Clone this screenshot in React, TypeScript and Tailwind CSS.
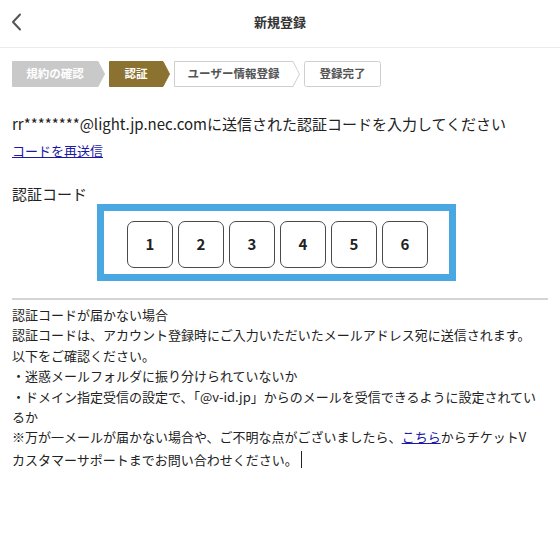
import React from "react";

function Step({
  width,
  fill,
  stroke,
  arrow,
  textColor,
  label,
}: {
  width: number;
  fill: string;
  stroke?: string;
  arrow: boolean;
  textColor: string;
  label: string;
}) {
  const h = 26;
  const tip = 7;
  const d = arrow
    ? `M0.5 0.5 H${width - tip} L${width - 0.5} ${h / 2} L${width - tip} ${h - 0.5} H0.5 Z`
    : `M2.5 0.5 H${width - 2.5} Q${width - 0.5} 0.5 ${width - 0.5} 2.5 V${h - 2.5} Q${width - 0.5} ${h - 0.5} ${width - 2.5} ${h - 0.5} H2.5 Q0.5 ${h - 0.5} 0.5 ${h - 2.5} V2.5 Q0.5 0.5 2.5 0.5 Z`;
  return (
    <div className="relative h-[26px] shrink-0" style={{ width }}>
      <svg className="absolute inset-0" width={width} height={h} viewBox={`0 0 ${width} ${h}`}>
        <path d={d} fill={fill} stroke={stroke ?? fill} strokeWidth={1} />
      </svg>
      <div
        className="relative flex h-full items-center justify-center text-[11.5px] font-bold"
        style={{ color: textColor, paddingRight: arrow ? tip : 0 }}
      >
        {label}
      </div>
    </div>
  );
}

export default function App() {
  const font = { fontFamily: '"Noto Sans CJK JP", "Noto Sans", sans-serif' };
  return (
    <div className="w-[560px] h-[560px] bg-white text-[#222]" style={font}>
      <header className="relative flex h-12 items-center justify-center border-b border-[#ececec]">
        <svg
          className="absolute left-[10px] top-[12px]"
          width="14"
          height="20"
          viewBox="0 0 14 20"
        >
          <polyline points="10,2.5 3,10 10,17.5" fill="none" stroke="#555" strokeWidth="2" strokeLinecap="round" strokeLinejoin="round" />
        </svg>
        <h1 className="text-[13px] font-bold text-[#333] -mt-[4px]">新規登録</h1>
      </header>

      <main className="px-3">
        <div className="mt-[13px] flex items-center gap-[4px]">
          <Step width={93} fill="#c9c9c9" arrow textColor="#ffffff" label="規約の確認" />
          <Step width={61} fill="#8c7230" arrow textColor="#ffffff" label="認証" />
          <Step width={126} fill="#ffffff" stroke="#cfcfcf" arrow textColor="#555" label="ユーザー情報登録" />
          <Step width={77} fill="#ffffff" stroke="#cfcfcf" arrow={false} textColor="#555" label="登録完了" />
        </div>

        <p className="mt-[26px] text-[15px] leading-[22px] text-[#222]">
          rr********@light.jp.nec.comに送信された認証コードを入力してください
        </p>
        <a href="#" className="mt-[6px] block text-[13px] leading-[20px] text-[#1a1aa6] underline">
          コードを再送信
        </a>

        <p className="mt-[23px] text-[15px] leading-[20px] text-[#222]">認証コード</p>

        <div className="ml-[85px] h-[77px] w-[359px] border-[7px] border-[#49a7e2] pl-[23px] pt-[10px]">
          <div className="flex gap-[5px]">
            {["1", "2", "3", "4", "5", "6"].map((n) => (
              <div
                key={n}
                className="flex h-[47px] w-[46px] items-center justify-center rounded-[7px] border border-[#4a4a4a] text-[15px] font-semibold text-[#222]"
              >
                {n}
              </div>
            ))}
          </div>
        </div>

        <div className="mt-[17px] h-[2px] bg-[#d4d4d4]" />

        <div className="mt-[5px] whitespace-nowrap text-[13px] leading-[20.4px] text-[#222]">
          認証コードが届かない場合
          <br />
          認証コードは、アカウント登録時にご入力いただいたメールアドレス宛に送信されます。
          <br />
          以下をご確認ください。
          <br />
          ・迷惑メールフォルダに振り分けられていないか
          <br />
          ・ドメイン指定受信の設定で、「@v-id.jp」からのメールを受信できるように設定されてい
          <br />
          るか
          <br />
          ※万が一メールが届かない場合や、ご不明な点がございましたら、
          <a href="#" className="text-[#1a1aa6] underline">
            こちら
          </a>
          からチケットV
          <br />
          カスタマーサポートまでお問い合わせください。
          <span className="ml-[3px] inline-block h-[17px] w-px translate-y-[3px] bg-[#222]" />
        </div>
      </main>
    </div>
  );
}
